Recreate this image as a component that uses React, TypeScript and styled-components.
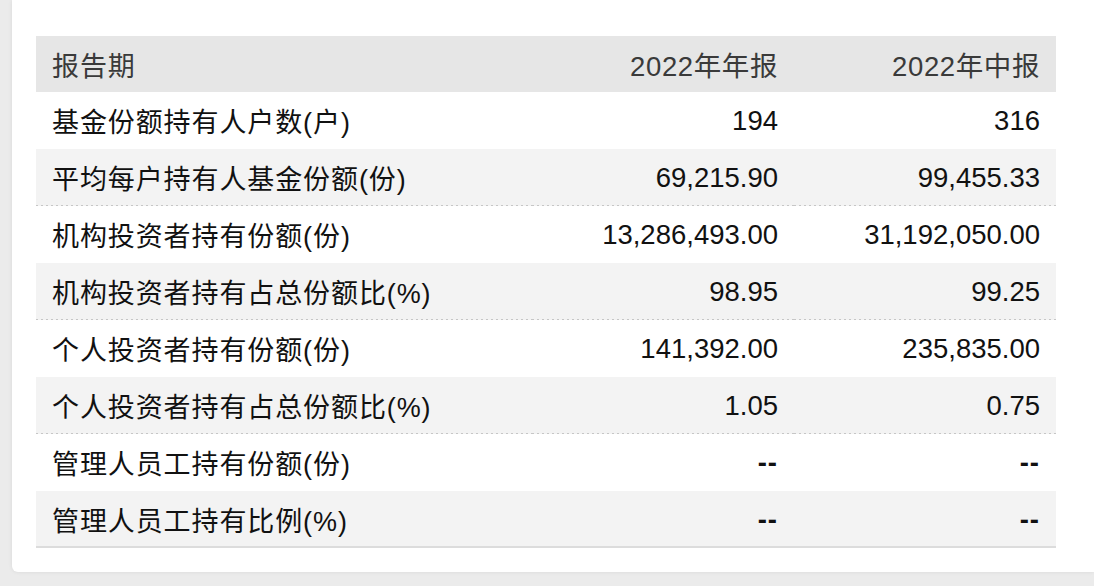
import React from "react";
import styled, { createGlobalStyle } from "styled-components";

const Global = createGlobalStyle`
  html, body { margin: 0; padding: 0; background: #ebebeb; }
  body { font-family: "Liberation Sans", "Noto Sans CJK SC", sans-serif; }
`;

const Page = styled.div`
  width: 1094px;
  height: 586px;
  overflow: hidden;
  background: #ebebeb;
  padding-left: 12px;
  box-sizing: border-box;
`;

const Card = styled.div`
  background: #fff;
  border-radius: 0 0 0 6px;
  box-shadow: 0 0 4px rgba(0, 0, 0, 0.08);
  padding: 36px 38px 24px 24px;
`;

const Table = styled.div`
  display: grid;
  grid-template-columns: 1fr 262px 262px;
`;

const Row = styled.div<{ $kind: "head" | "plain" | "shade" | "last" }>`
  display: contents;
  & > div {
    height: ${(p) => (p.$kind === "head" ? 56 : 57)}px;
    background-color: ${(p) =>
      p.$kind === "head" ? "#e6e6e6" : p.$kind === "plain" ? "#ffffff" : "#f3f3f3"};
    background-image: ${(p) =>
      p.$kind === "shade"
        ? "repeating-linear-gradient(to right, #c6c6c6 0 2px, transparent 2px 5px)"
        : p.$kind === "last"
        ? "linear-gradient(#dcdcdc, #dcdcdc)"
        : "none"};
    background-repeat: no-repeat;
    background-size: ${(p) => (p.$kind === "last" ? "100% 2px" : "100% 1px")};
    background-position: bottom left;
    color: ${(p) => (p.$kind === "head" ? "#3a3a3a" : "#111111")};
  }
`;

const Label = styled.div`
  display: flex;
  align-items: center;
  padding-left: 16px;
  font-family: "Liberation Sans", "Noto Sans CJK SC", sans-serif;
  font-size: 27px;
  letter-spacing: 0.9px;
`;

const Value = styled.div<{ $cjk?: boolean }>`
  display: flex;
  align-items: center;
  justify-content: flex-end;
  padding-right: 16px;
  font-family: "Liberation Sans", "Noto Sans CJK SC", sans-serif;
  font-size: ${(p) => (p.$cjk ? 27.5 : 27.5)}px;
  letter-spacing: ${(p) => (p.$cjk ? "0.6px" : "0")};
`;

const Dash = styled.span`
  font-weight: 700;
  letter-spacing: 1px;
`;

const rows: [string, string, string][] = [
  ["基金份额持有人户数(户)", "194", "316"],
  ["平均每户持有人基金份额(份)", "69,215.90", "99,455.33"],
  ["机构投资者持有份额(份)", "13,286,493.00", "31,192,050.00"],
  ["机构投资者持有占总份额比(%)", "98.95", "99.25"],
  ["个人投资者持有份额(份)", "141,392.00", "235,835.00"],
  ["个人投资者持有占总份额比(%)", "1.05", "0.75"],
  ["管理人员工持有份额(份)", "--", "--"],
  ["管理人员工持有比例(%)", "--", "--"],
];

const show = (v: string) => (v === "--" ? <Dash>--</Dash> : v);

export default function App() {
  return (
    <Page>
      <Global />
      <Card>
        <Table>
          <Row $kind="head">
            <Label>报告期</Label>
            <Value $cjk>2022年年报</Value>
            <Value $cjk>2022年中报</Value>
          </Row>
          {rows.map((r, i) => {
            const kind =
              i === rows.length - 1 ? "last" : i % 2 === 0 ? "plain" : "shade";
            return (
              <Row key={r[0]} $kind={kind}>
                <Label>{r[0]}</Label>
                <Value>{show(r[1])}</Value>
                <Value>{show(r[2])}</Value>
              </Row>
            );
          })}
        </Table>
      </Card>
    </Page>
  );
}
